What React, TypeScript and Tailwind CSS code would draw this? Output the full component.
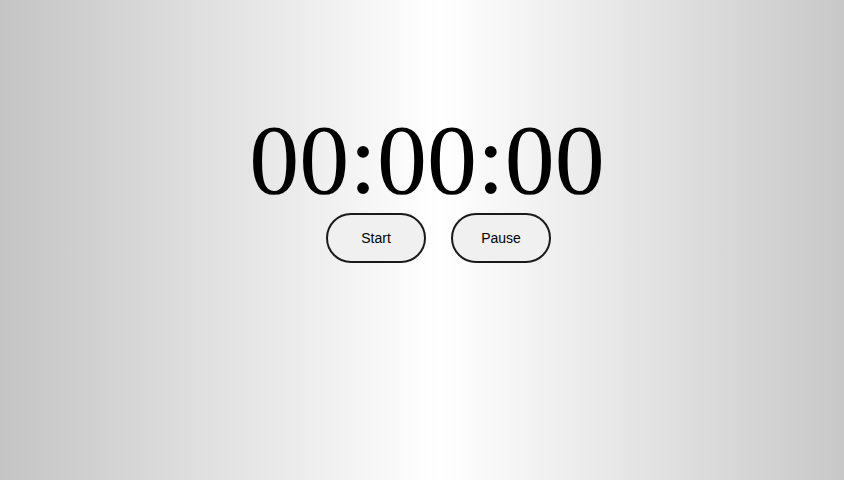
export default function App() {
  return (
    <div className="w-[844px] h-[480px] bg-[linear-gradient(to_right,#c4c4c4,#ffffff_52%,#c8c8c8)] flex flex-col items-center pt-[104px]">
      <div className="text-[100px] leading-[111px] text-black ml-[10px] font-['Liberation_Serif',serif]">
        00:00:00
      </div>
      <div className="flex gap-[25px] ml-[33px] -mt-[2px] font-['Liberation_Sans',sans-serif]">
        <button className="w-[100px] h-[50px] rounded-full border-2 border-[#1a1a1a] bg-[#f0f0f0] text-[14px] text-black">
          Start
        </button>
        <button className="w-[100px] h-[50px] rounded-full border-2 border-[#1a1a1a] bg-[#f0f0f0] text-[14px] text-black">
          Pause
        </button>
      </div>
    </div>
  );
}
